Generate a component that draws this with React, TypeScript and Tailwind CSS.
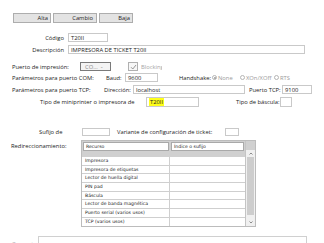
const rows = [
  "Impresora",
  "Impresora de etiquetas",
  "Lector de huella digital",
  "PIN pad",
  "Báscula",
  "Lector de banda magnética",
  "Puerto serial (varios usos)",
  "TCP (varios usos)",
];

function Field({ w, children }: { w: string; children?: React.ReactNode }) {
  return (
    <div
      className={`${w} h-full shrink-0 border border-[#c9c9c9] bg-white pl-[2px] leading-[8px] whitespace-nowrap overflow-hidden`}
    >
      {children}
    </div>
  );
}

function Radio({ on }: { on?: boolean }) {
  return (
    <span className="flex h-[5px] w-[5px] shrink-0 items-center justify-center rounded-full border border-[#b5b5b5] bg-white">
      {on && <span className="h-[2px] w-[2px] rounded-full bg-[#9a9a9a]" />}
    </span>
  );
}

export default function App() {
  return (
    <div className="h-[243px] w-[324px] overflow-hidden bg-white font-['Open_Sans',sans-serif] text-[5.8px] leading-[8px] text-[#222]">
      {/* Action buttons */}
      <div className="flex h-[23px] items-end gap-[2px] pl-[13px]">
        <button className="flex h-[10px] w-[38px] items-center justify-end border border-[#adadad] bg-[#e3e3e3] pr-[2px]">
          Alta
        </button>
        <button className="flex h-[10px] w-[44px] items-center justify-end border border-[#adadad] bg-[#e3e3e3] pr-[3px]">
          Cambio
        </button>
        <button className="flex h-[10px] w-[34px] items-center justify-end border border-[#adadad] bg-[#e3e3e3] pr-[2px]">
          Baja
        </button>
      </div>

      {/* Código / Descripción */}
      <div className="mt-[10px] flex h-[9px] items-center">
        <span className="w-[64px] shrink-0 text-right">Código</span>
        <div className="ml-[4px] h-full">
          <Field w="w-[40px]">T20II</Field>
        </div>
      </div>
      <div className="mt-[3px] flex h-[9px] items-center">
        <span className="w-[64px] shrink-0 text-right">Descripción</span>
        <div className="ml-[4px] h-full">
          <Field w="w-[237px]">IMPRESORA DE TICKET T20II</Field>
        </div>
      </div>

      {/* Puerto de impresión */}
      <div className="mt-[8px] flex h-[9px] items-center pl-[12px]">
        <span className="w-[68px] shrink-0 whitespace-nowrap">Puerto de impresión:</span>
        <div className="flex h-full w-[31px] shrink-0 items-center border border-[#7a7a7a] bg-[#f4f4f4] pl-[4px] text-[#8a8a8a]">
          CO... <span className="ml-[2px] text-[4px]">⌄</span>
        </div>
        <span className="ml-[17px] flex h-[9px] w-[10px] shrink-0 items-center justify-center border border-[#b0b0b0] bg-[#f7f7f7]">
          <svg width="7" height="6" viewBox="0 0 7 6">
            <path d="M1 3.2 L2.8 5 L6 1" fill="none" stroke="#8d8d8d" strokeWidth="0.9" />
          </svg>
        </span>
        <span className="ml-[3px] w-[21px] shrink-0 overflow-hidden whitespace-nowrap text-[#a5a5a5]">
          Blocking
        </span>
      </div>

      {/* COM */}
      <div className="mt-[2px] flex h-[9px] items-center pl-[12px]">
        <span className="w-[92px] shrink-0 whitespace-nowrap">Parámetros para puerto COM:</span>
        <span className="w-[21px] shrink-0 pl-[2px]">Baud:</span>
        <div className="h-full">
          <Field w="w-[33px]">9600</Field>
        </div>
        <span className="ml-[21px] w-[33px] shrink-0 whitespace-nowrap">Handshake:</span>
        <Radio on />
        <span className="ml-[1px] w-[22px] shrink-0 text-[#9a9a9a]">None</span>
        <Radio />
        <span className="ml-[1px] w-[28px] shrink-0 whitespace-nowrap text-[#9a9a9a]">XOn/XOff</span>
        <Radio />
        <span className="ml-[1px] shrink-0 text-[#9a9a9a]">RTS</span>
      </div>

      {/* TCP */}
      <div className="mt-[3px] flex h-[9px] items-center pl-[12px]">
        <span className="w-[92px] shrink-0 whitespace-nowrap">Parámetros para puerto TCP:</span>
        <span className="w-[29px] shrink-0 whitespace-nowrap">Dirección:</span>
        <div className="h-full">
          <Field w="w-[112px]">localhost</Field>
        </div>
        <span className="ml-[4px] w-[33px] shrink-0 whitespace-nowrap">Puerto TCP:</span>
        <div className="h-full">
          <Field w="w-[30px]">9100</Field>
        </div>
      </div>

      {/* Tipo de miniprinter */}
      <div className="mt-[3px] flex h-[10px] items-center pl-[40px]">
        <span className="w-[106px] shrink-0 whitespace-nowrap">Tipo de miniprinter o impresora de</span>
        <div className="h-full">
          <Field w="w-[53px]">
            <span className="bg-[#ffff1a] px-[1px] leading-[8px]">T20II</span>
          </Field>
        </div>
        <span className="ml-[37px] w-[44px] shrink-0 whitespace-nowrap">Tipo de báscula:</span>
        <div className="h-full">
          <Field w="w-[12px]" />
        </div>
      </div>

      {/* Sufijo / Variante */}
      <div className="mt-[21px] flex h-[8px] items-center pl-[39px]">
        <span className="w-[43px] shrink-0 whitespace-nowrap">Sufijo de</span>
        <div className="h-full">
          <Field w="w-[28px]" />
        </div>
        <span className="ml-[7px] w-[108px] shrink-0 whitespace-nowrap">
          Variante de configuración de ticket:
        </span>
        <div className="h-full">
          <Field w="w-[14px]" />
        </div>
      </div>

      {/* Redireccionamiento */}
      <div className="mt-[4px] flex h-[87px] pl-[11px]">
        <span className="mt-[2px] w-[70px] shrink-0 whitespace-nowrap">Redireccionamiento:</span>
        <div className="flex w-[175px] shrink-0 border border-[#bcbcbc] font-['DejaVu_Sans',sans-serif] text-[4.6px]">
          <div className="flex w-[163px] flex-col">
            <div className="flex h-[16px] shrink-0 items-start gap-[2px] bg-[#d0d0d0] px-[1px] pt-[1px]">
              <div className="flex h-[9px] w-[86px] items-center border border-[#a9a9a9] bg-white pl-[2px]">
                Recurso
              </div>
              <div className="flex h-[9px] w-[73px] items-center border border-[#a9a9a9] bg-white pl-[2px]">
                Índice o sufijo
              </div>
            </div>
            <div className="flex-1 overflow-hidden">
              {rows.map((r) => (
                <div key={r} className="flex h-[8.7px] border-b border-[#cfcfcf]">
                  <div className="flex w-[88px] items-center border-r border-[#cfcfcf] pl-[3px] whitespace-nowrap">
                    {r}
                  </div>
                  <div className="flex-1" />
                </div>
              ))}
            </div>
          </div>
          <div className="flex w-[10px] flex-col border-l border-[#c4c4c4]">
            <div className="h-[9px] bg-[#d0d0d0]" />
            <div className="flex h-[7px] items-center justify-center bg-[#f0f0f0]">
              <svg width="4" height="3" viewBox="0 0 4 3">
                <path d="M0.5 2.5 L2 1 L3.5 2.5" fill="none" stroke="#606060" strokeWidth="0.7" />
              </svg>
            </div>
            <div className="flex-1 bg-[#f0f0f0] px-[1px]">
              <div className="h-[58px] bg-[#cdcdcd]" />
            </div>
            <div className="flex h-[8px] items-center justify-center bg-[#f0f0f0]">
              <svg width="4" height="3" viewBox="0 0 4 3">
                <path d="M0.5 0.5 L2 2 L3.5 0.5" fill="none" stroke="#606060" strokeWidth="0.7" />
              </svg>
            </div>
          </div>
        </div>
      </div>

      {/* Bottom field */}
      <div className="mt-[9px] flex h-[20px] pl-[12px]">
        <span className="mt-[4px] w-[26px] shrink-0 whitespace-nowrap text-[#9a9a9a]">Comentario</span>
        <div className="w-[269px] shrink-0 border border-[#d0d0d0] bg-white" />
      </div>
    </div>
  );
}
